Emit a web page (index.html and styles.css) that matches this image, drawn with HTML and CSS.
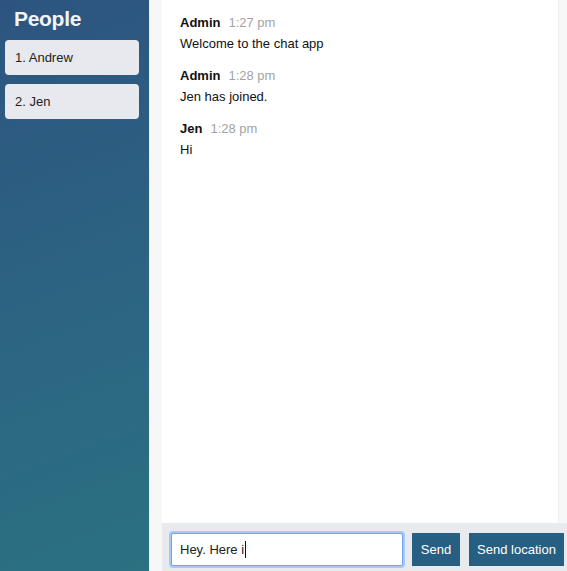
FILE: index.html
```html
<!DOCTYPE html>
<html>
<head>
<meta charset="utf-8">
<link rel="stylesheet" href="styles.css">
</head>
<body>
<div class="chat">
  <aside class="sidebar">
    <div class="sidebar__inner">
      <h3 class="sidebar__title">People</h3>
      <ol class="people">
        <li class="people__item">1. Andrew</li>
        <li class="people__item">2. Jen</li>
      </ol>
    </div>
    <div class="scrolltrack scrolltrack--side"></div>
  </aside>
  <main class="main">
    <div class="main__body">
      <ol class="messages">
        <li class="message">
          <div class="message__title"><span class="message__name">Admin</span><span class="message__time">1:27 pm</span></div>
          <div class="message__body">Welcome to the chat app</div>
        </li>
        <li class="message">
          <div class="message__title"><span class="message__name">Admin</span><span class="message__time">1:28 pm</span></div>
          <div class="message__body">Jen has joined.</div>
        </li>
        <li class="message">
          <div class="message__title"><span class="message__name">Jen</span><span class="message__time">1:28 pm</span></div>
          <div class="message__body">Hi</div>
        </li>
      </ol>
      <div class="scrolltrack scrolltrack--main"></div>
    </div>
    <footer class="footer">
      <div class="footer__input">Hey. Here i<span class="caret"></span></div>
      <button class="btn btn--send">Send</button>
      <button class="btn btn--loc">Send location</button>
    </footer>
  </main>
</div>
</body>
</html>
```
FILE: styles.css
```css
* { box-sizing: border-box; }
html, body { margin: 0; padding: 0; height: 100%; }
body {
  font-family: "Liberation Sans", Arial, sans-serif;
  font-size: 13px;
  color: #111;
  background: #fff;
}
.chat {
  display: flex;
  height: 571px;
}
.sidebar {
  display: flex;
  width: 162px;
  flex: 0 0 162px;
}
.sidebar__inner {
  width: 149px;
  background: #2b5a80;
  background-image: linear-gradient(160deg, #2d5480 0%, #2c6582 55%, #2b7182 100%);
  padding: 0 10px 0 5px;
}
.sidebar__title {
  margin: 0;
  padding: 8px 0 0 9px;
  height: 40px;
  color: #f2f4f7;
  font-size: 21px;
  font-weight: bold;
  line-height: 22px;
  letter-spacing: -0.3px;
}
.people {
  list-style: none;
  margin: 0;
  padding: 0;
}
.people__item {
  background: #e7e9ee;
  border-radius: 4px;
  height: 35px;
  line-height: 35px;
  padding-left: 10px;
  margin-bottom: 9px;
  font-size: 13px;
  color: #222;
}
.scrolltrack {
  background: #f7f7f7;
  border-left: 1px solid #efefef;
}
.scrolltrack--side { width: 13px; }
.scrolltrack--main { width: 10px; flex: 0 0 10px; }
.main {
  flex: 1;
  display: flex;
  flex-direction: column;
}
.main__body {
  flex: 1;
  display: flex;
}
.messages {
  flex: 1;
  list-style: none;
  margin: 0;
  padding: 15px 0 0 18px;
}
.message {
  margin-bottom: 15px;
}
.message__title {
  line-height: 16px;
  margin-bottom: 4px;
}
.message__name {
  font-weight: bold;
  color: #111;
  margin-right: 8px;
}
.message__time {
  color: #a3a3a3;
}
.message__body {
  line-height: 18px;
}
.footer {
  height: 48px;
  background: #e8eaee;
  display: flex;
  align-items: flex-start;
  padding: 10px 4px 0 9px;
  gap: 8px;
}
.footer__input {
  width: 232px;
  height: 33px;
  background: #fff;
  border: 1px solid #6fa3ec;
  box-shadow: 0 0 0 2px #a9c9f5;
  border-radius: 2px;
  padding: 0 8px;
  line-height: 31px;
  font-size: 13px;
  color: #222;
  margin-right: 1px;
}
.caret {
  display: inline-block;
  width: 1px;
  height: 17px;
  background: #111;
  vertical-align: -4px;
  margin-left: 1px;
}
.btn {
  height: 33px;
  border: none;
  background: #265f82;
  color: #fff;
  font-family: "Liberation Sans", Arial, sans-serif;
  font-size: 13px;
  padding: 0;
  margin: 0;
}
.btn--send { width: 48px; }
.btn--loc { width: 95px; margin-left: 1px; }
```
